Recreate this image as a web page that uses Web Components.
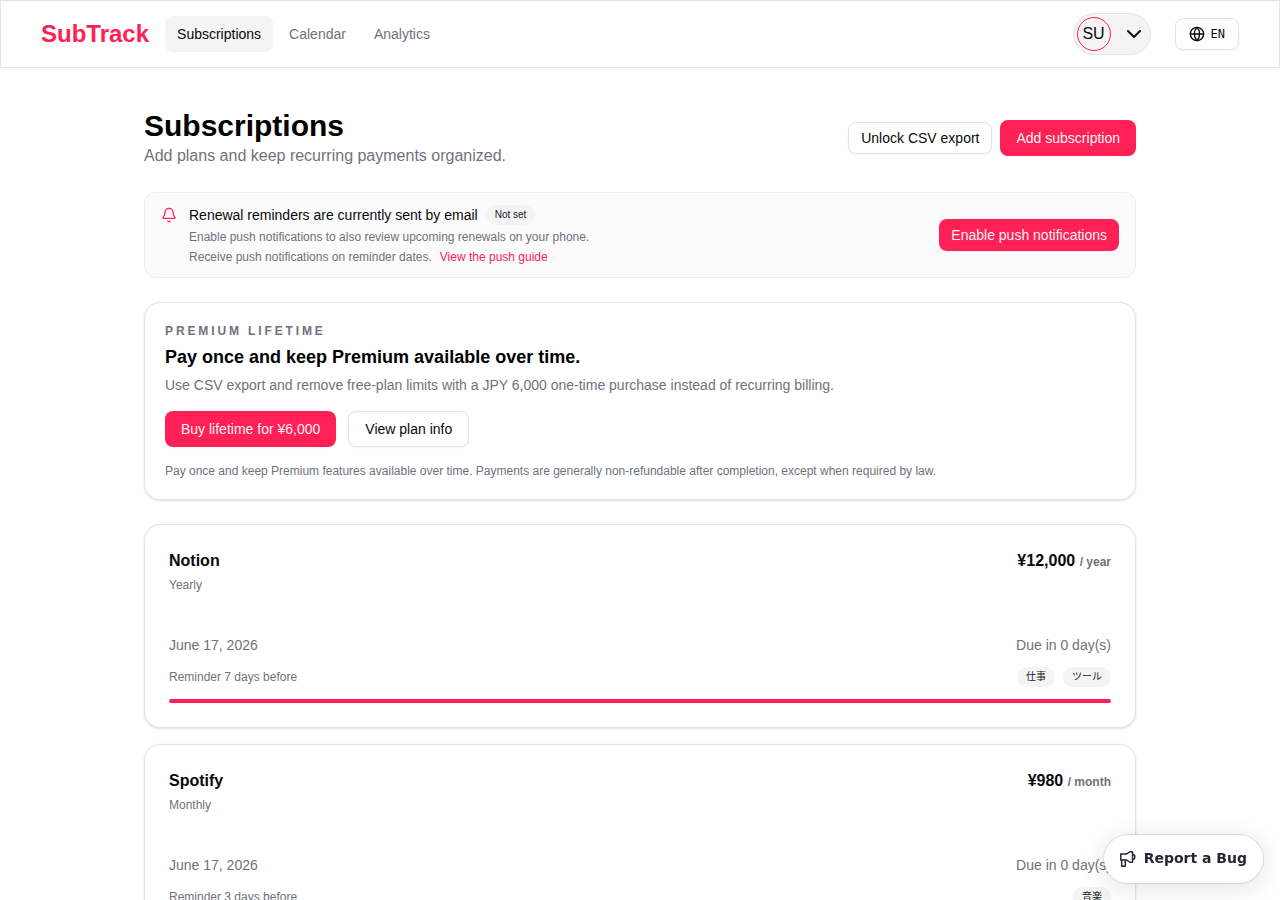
<!DOCTYPE html>
<html lang="en">

<head>
    <meta charset="utf-8">
    <meta name="viewport" content="width=device-width, initial-scale=1">
    <title>SubTrack</title>
    <style>
        :root {
            --primary: #ff2056;
            --primary-text: #fff1f2;
            --text: #09090b;
            --muted: #71717b;
            --soft: #f4f4f5;
            --line: #e4e4e7;
            --shadow-xs: 0 1px 2px rgba(0, 0, 0, 0.05);
            --shadow-sm: 0 1px 3px rgba(0, 0, 0, 0.1), 0 1px 2px -1px rgba(0, 0, 0, 0.1);
        }

        body {
            margin: 0;
            background: #fff;
            color: var(--text);
            font-family: "Liberation Sans", "Noto Sans CJK JP", sans-serif;
            font-size: 16px;
            line-height: 24px;
        }

        main {
            display: flex;
            flex-direction: column;
            gap: 24px;
            box-sizing: border-box;
            max-width: 1024px;
            margin: 0 auto;
            padding: 40px 16px;
        }

        .list {
            display: grid;
            gap: 16px;
        }
    </style>
</head>

<body>
    <app-header>
        <nav-link href="#subscriptions" active>Subscriptions</nav-link>
        <nav-link href="#calendar">Calendar</nav-link>
        <nav-link href="#analytics">Analytics</nav-link>
    </app-header>

    <main>
        <page-heading heading="Subscriptions" description="Add plans and keep recurring payments organized.">
            <app-button variant="outline" size="sm">Unlock CSV export</app-button>
            <app-button>Add subscription</app-button>
        </page-heading>

        <reminder-banner>
            <span slot="title">Renewal reminders are currently sent by email</span>
            <tag-badge slot="status">Not set</tag-badge>
            <span slot="text">Enable push notifications to also review upcoming renewals on your phone.</span>
            <span slot="hint">Receive push notifications on reminder dates.</span>
            <app-button slot="action" size="sm">Enable push notifications</app-button>
        </reminder-banner>

        <premium-card>
            <span slot="label">PREMIUM LIFETIME</span>
            <span slot="title">Pay once and keep Premium available over time.</span>
            <span slot="text">Use CSV export and remove free-plan limits with a JPY 6,000 one-time purchase instead of recurring billing.</span>
            <app-button>Buy lifetime for ¥6,000</app-button>
            <app-button variant="outline">View plan info</app-button>
            <span slot="note">Pay once and keep Premium features available over time. Payments are generally non-refundable after completion, except when required by law.</span>
        </premium-card>

        <div class="list">
            <subscription-card name="Notion" cycle="Yearly" price="¥12,000" unit="/ year" date="June 17, 2026" due="Due in 0 day(s)" reminder="Reminder 7 days before">
                <tag-badge lang="ja">仕事</tag-badge>
                <tag-badge lang="ja">ツール</tag-badge>
            </subscription-card>
            <subscription-card name="Spotify" cycle="Monthly" price="¥980" unit="/ month" date="June 17, 2026" due="Due in 0 day(s)" reminder="Reminder 3 days before">
                <tag-badge lang="ja">音楽</tag-badge>
            </subscription-card>
        </div>
    </main>

    <report-button>Report a Bug</report-button>

    <script type="text/javascript">
        // Attach an open shadow root and fill it
        function render(host, html) {
            host.attachShadow({ mode: 'open' }).innerHTML = html;
        }

        // --- SMALL PARTS ---
        customElements.define('app-button', class extends HTMLElement {
            constructor() {
                super();
                render(this, `
                    <style>
                        :host { display: inline-flex; flex: none; }
                        button {
                            height: 36px; padding: 0 16px; border: 0; border-radius: 8px;
                            background: var(--primary); color: var(--primary-text);
                            font: inherit; font-size: 14px; line-height: 20px; white-space: nowrap;
                            box-shadow: var(--shadow-xs); cursor: pointer;
                        }
                        button:hover { opacity: 0.9; }
                        :host([size="sm"]) button { height: 32px; padding: 0 12px; }
                        :host([variant="outline"]) button {
                            background: #fff; color: var(--text); border: 1px solid var(--line);
                        }
                    </style>
                    <button type="button"><slot></slot></button>`);
            }
        });

        customElements.define('tag-badge', class extends HTMLElement {
            constructor() {
                super();
                render(this, `
                    <style>
                        :host {
                            display: inline-flex; align-items: center; box-sizing: border-box; height: 20px;
                            padding: 0 8px; border: 1px solid transparent; border-radius: 10px;
                            background: var(--soft); color: #18181b;
                            font-size: 10px; line-height: 16px; white-space: nowrap;
                        }
                    </style>
                    <slot></slot>`);
            }
        });

        customElements.define('nav-link', class extends HTMLElement {
            constructor() {
                super();
                render(this, `
                    <style>
                        :host { display: block; }
                        a {
                            display: block; padding: 8px 12px; border-radius: 8px;
                            color: var(--muted); font-size: 14px; line-height: 20px; text-decoration: none;
                        }
                        :host([active]) a { background: var(--soft); color: var(--text); }
                    </style>
                    <a href="${this.getAttribute('href')}"><slot></slot></a>`);
            }
        });

        // --- TOP BAR ---
        customElements.define('app-header', class extends HTMLElement {
            constructor() {
                super();
                render(this, `
                    <style>
                        :host { display: block; }
                        header {
                            display: flex; align-items: center; justify-content: space-between;
                            padding: 12px 40px; border: 1px solid var(--line); background: #fff;
                        }
                        .left { display: flex; align-items: center; gap: 16px; }
                        .logo { color: var(--primary); font-size: 24px; line-height: 32px; font-weight: 700; text-decoration: none; }
                        nav { display: flex; gap: 4px; }
                        .right { display: flex; align-items: center; gap: 24px; }
                        button { font: inherit; color: inherit; display: flex; align-items: center; border: 1px solid var(--line); cursor: pointer; }
                        .user { height: 42px; gap: 14px; padding: 0 7px 0 3px; border-radius: 21px; background: var(--soft); }
                        .avatar {
                            display: flex; align-items: center; justify-content: center; box-sizing: border-box;
                            width: 34px; height: 34px; border: 1px solid var(--primary); border-radius: 50%;
                        }
                        .lang {
                            height: 32px; gap: 6px; padding: 0 13px; border-radius: 8px; background: #fff;
                            font-family: "DejaVu Sans Mono", monospace; font-size: 12px; line-height: 16px;
                            box-shadow: var(--shadow-xs);
                        }
                        svg { display: block; fill: none; stroke: currentColor; stroke-linecap: round; stroke-linejoin: round; }
                    </style>
                    <header>
                        <div class="left">
                            <a class="logo" href="#">SubTrack</a>
                            <nav><slot></slot></nav>
                        </div>
                        <div class="right">
                            <button class="user" type="button" aria-label="Account menu">
                                <span class="avatar">SU</span>
                                <svg width="18" height="18" viewBox="0 0 18 18" stroke-width="2"><path d="M3 6l6 6 6-6"/></svg>
                            </button>
                            <button class="lang" type="button">
                                <svg width="16" height="16" viewBox="0 0 24 24" stroke-width="2"><circle cx="12" cy="12" r="10"/><path d="M12 2a14.5 14.5 0 0 0 0 20 14.5 14.5 0 0 0 0-20"/><path d="M2 12h20"/></svg>
                                <span>EN</span>
                            </button>
                        </div>
                    </header>`);
            }
        });

        customElements.define('page-heading', class extends HTMLElement {
            constructor() {
                super();
                render(this, `
                    <style>
                        :host { display: flex; align-items: center; justify-content: space-between; gap: 16px; }
                        h1 { margin: 0; font-size: 30px; line-height: 36px; font-weight: 700; color: #000; }
                        p { margin: 0; color: var(--muted); }
                        .actions { display: flex; align-items: center; gap: 8px; }
                    </style>
                    <div>
                        <h1>${this.getAttribute('heading')}</h1>
                        <p>${this.getAttribute('description')}</p>
                    </div>
                    <div class="actions"><slot></slot></div>`);
            }
        });

        // --- PUSH REMINDER NOTICE ---
        customElements.define('reminder-banner', class extends HTMLElement {
            constructor() {
                super();
                render(this, `
                    <style>
                        :host {
                            display: flex; align-items: center; justify-content: space-between; gap: 16px;
                            padding: 12px 16px; border: 1px solid #ececee; border-radius: 12px; background: #fbfbfb;
                        }
                        .info { display: flex; align-items: flex-start; gap: 12px; }
                        svg { flex: none; margin-top: 2px; color: var(--primary); fill: none; stroke: currentColor; stroke-linecap: round; stroke-linejoin: round; }
                        .lines { display: grid; gap: 4px; font-size: 12px; line-height: 16px; color: var(--muted); }
                        .title { display: flex; align-items: center; gap: 8px; font-size: 14px; line-height: 20px; color: var(--text); }
                        .hint { display: flex; gap: 8px; }
                        a { color: var(--primary); text-decoration: none; }
                    </style>
                    <div class="info">
                        <svg width="16" height="16" viewBox="0 0 24 24" stroke-width="2"><path d="M10.268 21a2 2 0 0 0 3.464 0"/><path d="M3.262 15.326A1 1 0 0 0 4 17h16a1 1 0 0 0 .74-1.673C19.41 13.956 18 12.499 18 8A6 6 0 0 0 6 8c0 4.499-1.411 5.956-2.738 7.326"/></svg>
                        <div class="lines">
                            <div class="title"><slot name="title"></slot><slot name="status"></slot></div>
                            <div><slot name="text"></slot></div>
                            <div class="hint"><slot name="hint"></slot><a href="#push-guide">View the push guide</a></div>
                        </div>
                    </div>
                    <slot name="action"></slot>`);
            }
        });

        customElements.define('premium-card', class extends HTMLElement {
            constructor() {
                super();
                render(this, `
                    <style>
                        :host {
                            display: block; padding: 20px; border: 1px solid var(--line);
                            border-radius: 16px; background: #fff; box-shadow: var(--shadow-sm);
                        }
                        h2, p { margin: 0; color: var(--muted); }
                        .label { font-size: 12px; line-height: 16px; font-weight: 700; letter-spacing: 0.24em; }
                        h2 { margin: 4px 0; color: #000; font-size: 18px; line-height: 28px; }
                        .text { font-size: 14px; line-height: 20px; }
                        .actions { display: flex; gap: 12px; margin: 16px 0; }
                        .note { font-size: 12px; line-height: 16px; }
                    </style>
                    <p class="label"><slot name="label"></slot></p>
                    <h2><slot name="title"></slot></h2>
                    <p class="text"><slot name="text"></slot></p>
                    <div class="actions"><slot></slot></div>
                    <p class="note"><slot name="note"></slot></p>`);
            }
        });

        // --- ONE SUBSCRIPTION ---
        customElements.define('subscription-card', class extends HTMLElement {
            constructor() {
                super();
                const get = name => this.getAttribute(name);
                render(this, `
                    <style>
                        :host {
                            display: block; padding: 24px; border: 1px solid var(--line);
                            border-radius: 16px; background: #fff; box-shadow: var(--shadow-sm);
                        }
                        .row { display: flex; align-items: center; justify-content: space-between; }
                        h3 { margin: 0; font-size: 16px; line-height: 24px; }
                        .price { font-weight: 700; }
                        .price small { font-size: 12px; line-height: 16px; color: var(--muted); }
                        .small { margin: 0; font-size: 12px; line-height: 16px; color: var(--muted); }
                        .cycle { margin: 4px 0 42px; }
                        .dates { margin-bottom: 12px; font-size: 14px; line-height: 20px; color: var(--muted); }
                        .tags { display: flex; gap: 8px; }
                        .bar { height: 4px; margin-top: 12px; border-radius: 2px; background: var(--primary); }
                    </style>
                    <div class="row">
                        <h3>${get('name')}</h3>
                        <div class="price">${get('price')} <small>${get('unit')}</small></div>
                    </div>
                    <p class="small cycle">${get('cycle')}</p>
                    <div class="row dates"><span>${get('date')}</span><span>${get('due')}</span></div>
                    <div class="row">
                        <p class="small">${get('reminder')}</p>
                        <div class="tags"><slot></slot></div>
                    </div>
                    <div class="bar" role="progressbar" aria-label="Billing period" aria-valuenow="100"></div>`);
            }
        });

        // --- FLOATING FEEDBACK BUTTON ---
        customElements.define('report-button', class extends HTMLElement {
            constructor() {
                super();
                render(this, `
                    <style>
                        :host { position: fixed; right: 16px; bottom: 16px; }
                        button {
                            display: flex; align-items: flex-start; gap: 8px; padding: 16px;
                            border: 1px solid rgba(41, 35, 47, 0.13); border-radius: 25px;
                            background: #fff; background-clip: padding-box; color: #2b2233;
                            font: 600 14px/14px "DejaVu Sans", sans-serif;
                            box-shadow: 0 4px 24px rgba(43, 34, 51, 0.12); cursor: pointer;
                        }
                        svg { display: block; fill: none; stroke: currentColor; stroke-linejoin: round; }
                    </style>
                    <button type="button">
                        <svg width="16" height="16" viewBox="0 0 20 20" stroke-width="1.8"><path d="M.95 3.7h7.4l4-2.75h3.3v13.1h-3.3l-4-2.8H.95z"/><path d="M2.05 11.25v7.8H6.6v-7.8"/><path d="M15.7 4.1a3.45 3.45 0 0 1 0 6.8"/></svg>
                        <slot></slot>
                    </button>`);
            }
        });
    </script>
</body>

</html>
